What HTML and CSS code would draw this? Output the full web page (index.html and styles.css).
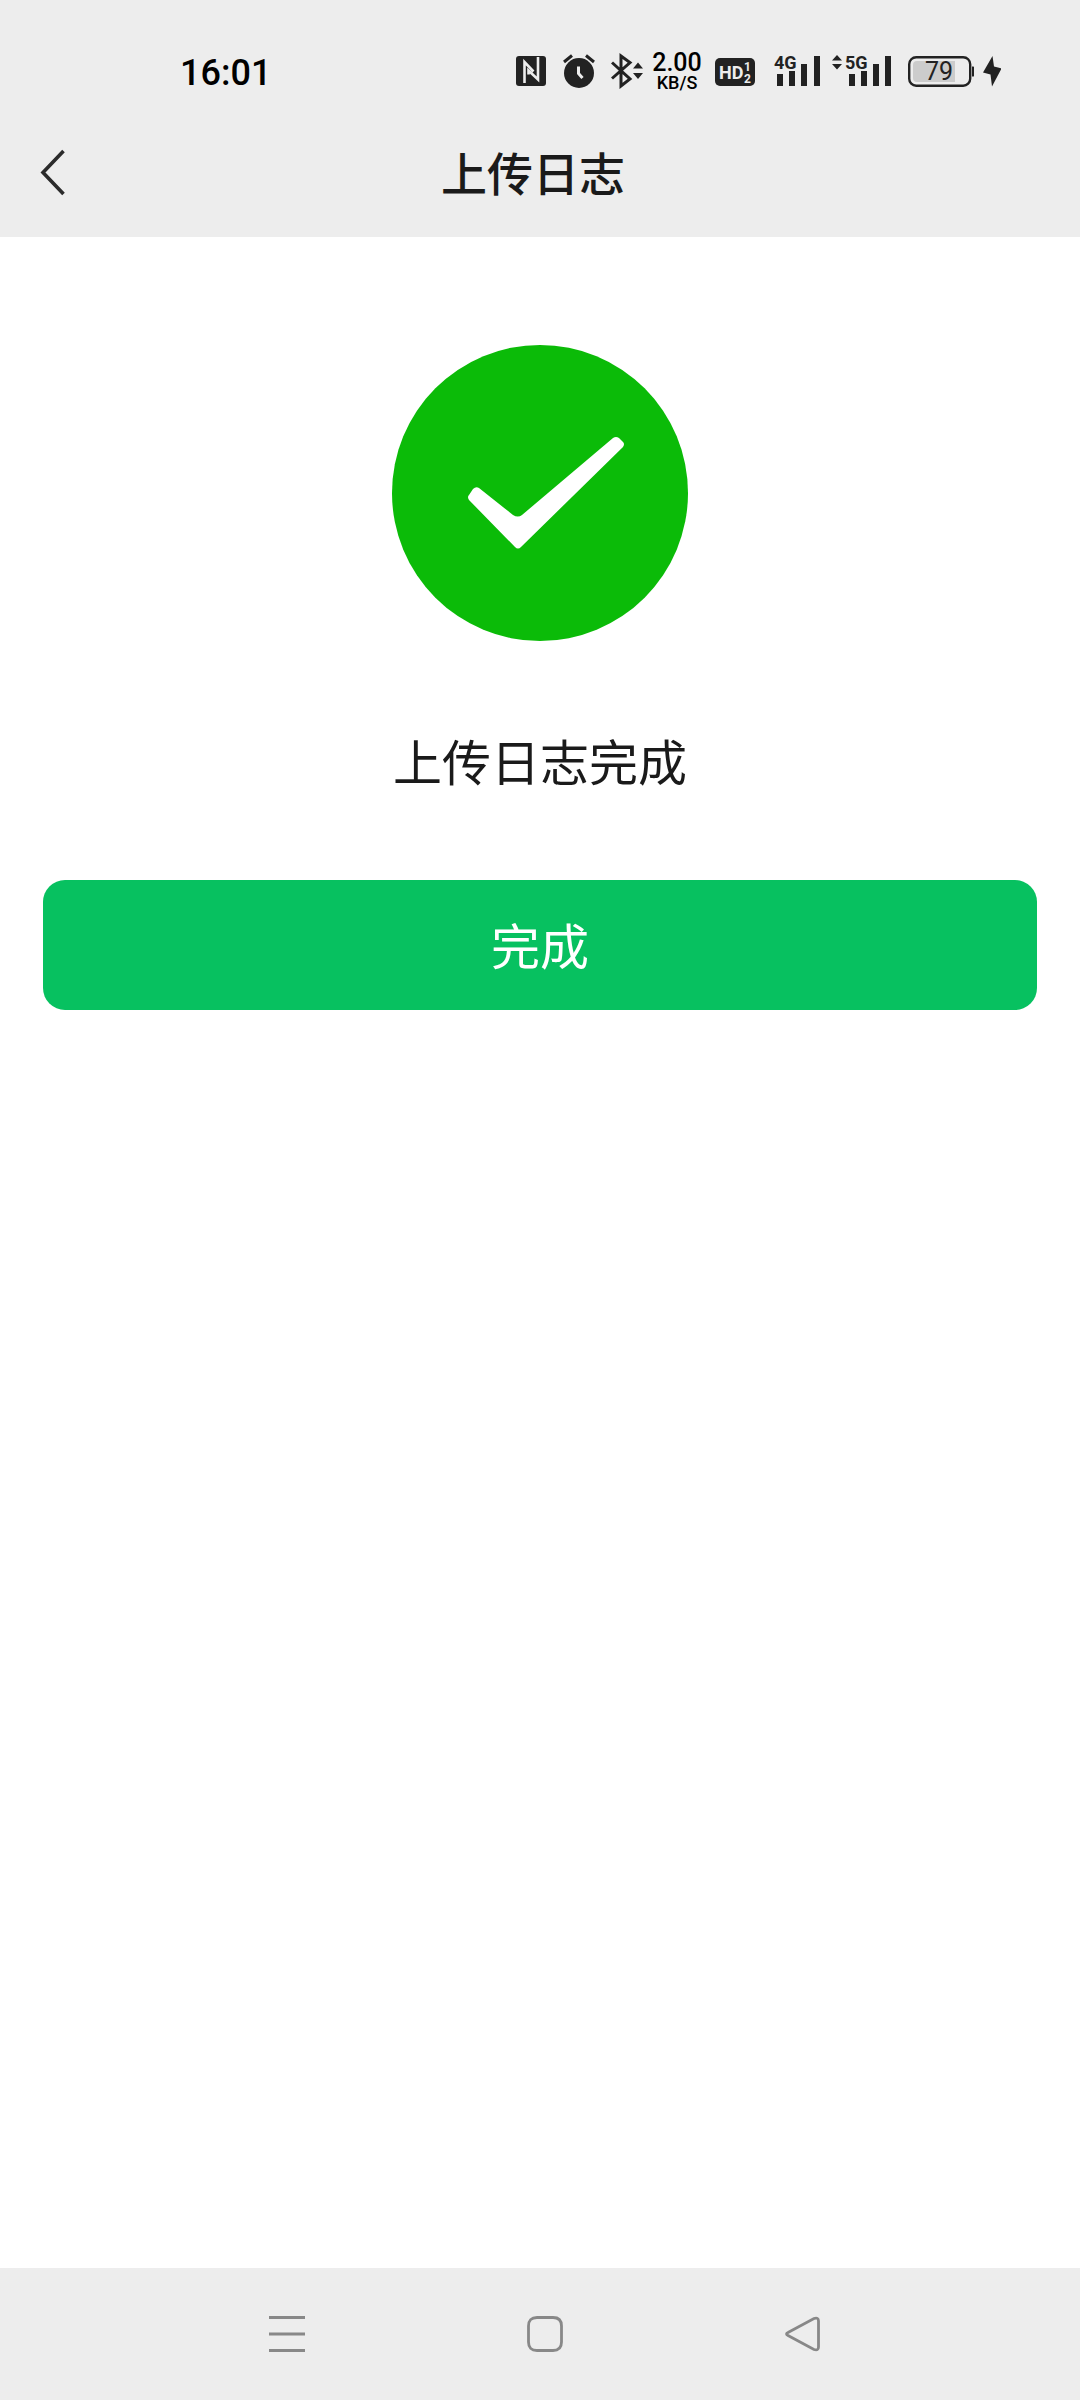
FILE: index.html
```html
<!DOCTYPE html>
<html lang="zh-CN">
<head>
<meta charset="utf-8">
<meta name="viewport" content="width=device-width, initial-scale=1">
<title>上传日志</title>
<link rel="stylesheet" href="styles.css">
</head>
<body>
<div class="status-bar">
  <time class="clock">16:01</time>
  <div class="status-icons">
    <svg width="38" height="36" viewBox="0 0 38 36" aria-label="NFC">
      <rect x="4" y="3" width="30" height="30" rx="3" fill="#222"/>
      <path d="M12.500 30V9l9 9.500M26 4v22.500L16.500 17.500v4" fill="none" stroke="#ededed" stroke-width="2.600"/>
    </svg>
    <svg width="43" height="36" viewBox="0 0 43 36" aria-label="Alarm">
      <circle cx="20" cy="20" r="15" fill="#222"/>
      <path d="M5 9l8-6.500M35 9l-8-6.500" stroke="#222" stroke-width="3"/>
      <path d="M19.500 13.500v7l4 4.500" fill="none" stroke="#ededed" stroke-width="3"/>
    </svg>
    <svg width="32" height="36" viewBox="0 0 32 36" aria-label="Bluetooth">
      <path d="M1 9.500L19 26l-9 7V3l9 6.500L1 25.500" fill="none" stroke="#222" stroke-width="3"/>
      <path d="M22 15.500h10l-5-6zM22 20h10l-5 6z" fill="#222"/>
    </svg>
    <div class="speed"><span class="speed-value">2.00</span><span class="speed-unit">KB/S</span></div>
    <svg width="45" height="36" viewBox="0 0 45 36" aria-label="HD">
      <rect y="5" width="40" height="28" rx="5" fill="#222"/>
      <text class="hd-text" x="4" y="26">HD</text>
      <text class="sim-text" x="29" y="18">1</text>
      <text class="sim-text" x="29" y="30">2</text>
    </svg>
    <svg width="54" height="36" viewBox="0 0 54 36" aria-label="4G">
      <text class="net-text" x="5" y="16">4G</text>
      <path d="M8 21h6v12H8zM20 18h6v15h-6zM32 11h6v22h-6zM45 3h6v30h-6z" fill="#222"/>
    </svg>
    <svg width="67" height="36" viewBox="0 0 67 36" aria-label="5G">
      <path d="M0 7.500h10L5 2zM0 11h10l-5 5.500z" fill="#222"/>
      <text class="net-text" x="13" y="16">5G</text>
      <path d="M17 21h6v12h-6zM29 18h6v15h-6zM41 11h6v22h-6zM53 3h6v30h-6z" fill="#222"/>
    </svg>
    <svg width="66" height="36" viewBox="0 0 66 36" aria-label="79%">
      <rect x="1.200" y="4.200" width="61" height="28.500" rx="7" fill="none" stroke="#222" stroke-width="2.400"/>
      <path d="M9 8h38v21H9a4 4 0 0 1-4-4V12a4 4 0 0 1 4-4z" fill="#ccc"/>
      <path d="M64 13.500h1a1.500 1.500 0 0 1 1.500 1.500v7a1.500 1.500 0 0 1-1.500 1.500h-1z" fill="#222"/>
      <text class="battery-text" x="31" y="27">79</text>
    </svg>
    <svg width="18" height="36" viewBox="0 0 18 36" aria-label="Charging">
      <path d="M9.500 3L0 19.500l7.500 2L9 33.500 18.500 15.500 11 13.500z" fill="#222"/>
    </svg>
  </div>
</div>

<header class="app-bar">
  <button class="back" type="button" aria-label="返回">
    <svg width="26" height="48" viewBox="0 0 26 48"><path d="M23.500 2L3 23.500 23.500 45" fill="none" stroke="#2b2b2b" stroke-width="3.600"/></svg>
  </button>
  <h1 class="title">上传日志</h1>
</header>

<main class="content">
  <svg class="result-icon" width="296" height="296" viewBox="0 0 296 296" aria-hidden="true">
    <circle cx="148" cy="148" r="148" fill="#0bbb08"/>
    <path d="M77 150Q75 152 77 155L123 202Q126 205 129 202L231 102Q233 99 231 97L227 93Q224 91 221 93L130 170Q126 173 121 170L87 143Q84 141 81 144Z" fill="#fff"/>
  </svg>
  <p class="message">上传日志完成</p>
  <button class="done" type="button">完成</button>
</main>

<nav class="system-nav">
  <button class="nav-button" type="button" aria-label="最近任务">
    <svg width="36" height="36" viewBox="0 0 36 36"><path d="M0 1.500h36M0 18h36M0 34.500h36" stroke="#888" stroke-width="3"/></svg>
  </button>
  <button class="nav-button" type="button" aria-label="主屏幕">
    <svg width="36" height="36" viewBox="0 0 36 36"><path d="M10 1.500H26Q34.500 1.500 34.500 10V26Q34.500 34.500 26 34.500H10Q1.500 34.500 1.500 26V10Q1.500 1.500 10 1.500Z" fill="none" stroke="#888" stroke-width="2.800"/></svg>
  </button>
  <button class="nav-button" type="button" aria-label="返回">
    <svg width="36" height="36" viewBox="0 0 36 36"><path d="M3 16.500L29 2.500Q33.500 1 33.500 5V31Q33.500 35 29 33.500L3 19.500Q0 18 3 16.500Z" fill="none" stroke="#888" stroke-width="2.800"/></svg>
  </button>
</nav>
</body>
</html>
```
FILE: styles.css
```css
* {
  box-sizing: border-box;
}

body {
  margin: 0;
  min-height: 100vh;
  display: flex;
  flex-direction: column;
  background: #fff;
  color: #1a1a1a;
  font-family: Roboto, "Noto Sans CJK SC", sans-serif;
}

button {
  margin: 0;
  padding: 0;
  border: 0;
  background: none;
  font-family: inherit;
  cursor: pointer;
}

svg {
  display: block;
  flex: none;
}

.status-bar {
  display: flex;
  align-items: center;
  justify-content: space-between;
  height: 112px;
  padding: 30px 79px 0 180px;
  background: #ededed;
}

.clock {
  padding-top: 4px;
  color: #000;
  font-size: 36px;
  font-weight: 500;
  line-height: 40px;
}

.status-icons {
  display: flex;
  align-items: center;
  gap: 9px;
}

.speed {
  display: flex;
  flex-direction: column;
  align-items: center;
  width: 54px;
  padding: 2px 4px 0 0;
  color: #000;
  font-weight: 500;
}

.speed-value {
  font-size: 25px;
  line-height: 22px;
}

.speed-unit {
  font-size: 18px;
  line-height: 18px;
}

.hd-text,
.sim-text,
.net-text {
  font-weight: 700;
}

.hd-text {
  fill: #ededed;
  font-size: 18px;
}

.sim-text {
  fill: #ededed;
  font-size: 12px;
}

.net-text {
  fill: #222;
  font-size: 18px;
}

.battery-text {
  fill: #222;
  font-size: 25px;
  text-anchor: middle;
}

.app-bar {
  display: grid;
  grid-template-columns: 96px 1fr 110px;
  align-items: center;
  height: 125px;
  background: #ededed;
}

.back {
  display: flex;
  align-items: center;
  height: 96px;
  padding: 0 0 4px 40px;
}

.title {
  margin: 0;
  font-size: 46px;
  font-weight: 500;
  line-height: 64px;
  text-align: center;
}

.content {
  flex: 1;
  display: flex;
  flex-direction: column;
  align-items: center;
  padding: 108px 43px;
}

.message {
  margin: 86px 0 78px;
  font-size: 49px;
  line-height: 75px;
}

.done {
  width: 100%;
  height: 130px;
  padding-bottom: 4px;
  border-radius: 22px;
  background: #07c160;
  color: #fff;
  font-size: 49px;
}

.system-nav {
  display: flex;
  justify-content: center;
  height: 132px;
  padding: 0 148px 0 158px;
  background: #ededed;
}

.nav-button {
  flex: 1;
  display: flex;
  align-items: center;
  justify-content: center;
}
```
